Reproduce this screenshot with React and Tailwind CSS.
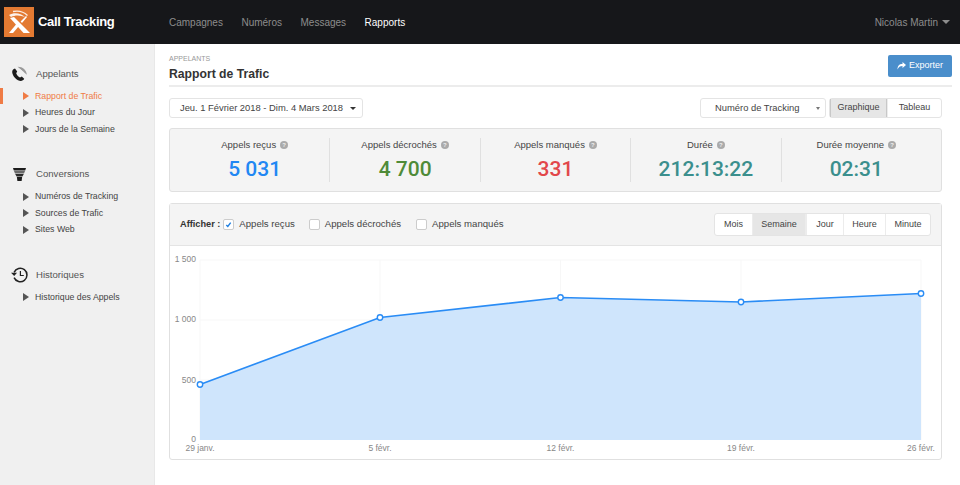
import React from "react";

const F = "font-['Liberation_Sans',Arial,sans-serif]";

function Logo() {
  return (
    <svg width="30" height="30" viewBox="0 0 30 30" className="block">
      <rect width="30" height="30" fill="#e37a32" />
      <path d="M6 11 L10 10 L26 26 L19.5 26 Z" fill="#fff" />
      <path d="M5 26 L13.2 16 L15.4 18.4 L9 26 Z" fill="#fff" />
      <path d="M16.6 14.6 L22 9 L23 10 L18 16 Z" fill="#fff" />
      <path d="M5 8 C10 5 17 6 21 10 C16 8 11 8 7 10 Z" fill="#fff" opacity="0.9" />
      <path d="M9 4.5 C14 3.5 20 5 23.5 8.5" stroke="#fff" strokeWidth="1.3" fill="none" opacity="0.85" />
    </svg>
  );
}

function PhoneIcon() {
  return (
    <svg width="17" height="16" viewBox="0 0 17 16">
      <path d="M4 2.5 L6.2 5.4 L5.2 7.2 C5.8 9 7.2 10.6 9 11.4 L10.8 10.4 L13.2 12.8 C12.2 15 9.6 15.6 7 14.2 C3.6 12.4 1.2 8.8 1.2 5.8 C1.2 4.2 2.2 3 4 2.5 Z" fill="#1c1c1c" />
      <path d="M6.6 0.8 L15.8 8.8 C15.6 4.2 11.4 0.6 6.6 0.8 Z" fill="#9a9a9a" />
      <path d="M7 3 C10 3.4 12.6 5.6 13.6 8.6 M7.4 5 C9 5.4 10.6 6.8 11.4 8.6" stroke="#f0f0f0" strokeWidth="0.7" fill="none" />
    </svg>
  );
}

function FunnelIcon() {
  return (
    <svg width="13" height="13" viewBox="0 0 13 13">
      <path d="M0 0 H13 L12.2 2.4 H0.8 Z" fill="#1c1c1c" />
      <path d="M1 2.9 H12 L11 5.4 H2 Z" fill="#6a6a6a" />
      <path d="M2.2 5.9 H10.8 L9.4 8.4 H3.6 Z" fill="#2a2a2a" />
      <path d="M3.9 8.9 H9.1 L8.6 13 H4.4 Z" fill="#1c1c1c" />
    </svg>
  );
}

function HistoryIcon() {
  return (
    <svg width="17" height="16" viewBox="0 0 17 16" fill="none" stroke="#222" strokeWidth="1.5">
      <path d="M3.1 5.4 A6.7 6.7 0 1 1 3.1 10.6" />
      <path d="M0 5.8 L3.2 9 L6 5.8 Z" fill="#222" stroke="none" />
      <path d="M9.4 4 V8.5 H12.8" strokeWidth="1.2" />
    </svg>
  );
}

function Tri({ active }) {
  return (
    <span className={`mr-[6px] ml-[23px] h-0 w-0 border-y-[4px] border-l-[6px] border-y-transparent ${active ? "border-l-[#ef7b45]" : "border-l-[#555]"}`} />
  );
}

function SideItem({ children, active }) {
  return (
    <div className={`relative flex h-[16.5px] items-center text-[8.75px] ${active ? "text-[#ef7b45]" : "text-[#444]"}`}>
      {active && <span className="absolute top-0 left-0 h-[16px] w-[3px] bg-[#ef7b45]" />}
      <Tri active={active} />
      <span>{children}</span>
    </div>
  );
}

function SideGroup({ icon, title, items, active, className }) {
  return (
    <div className={className}>
      <div className="flex h-[22px] items-center">
        <span className="flex w-[36px] justify-center pl-[2px]">{icon}</span>
        <span className="text-[9.6px] text-[#555]">{title}</span>
      </div>
      <div className="mt-[3px]">
        {items.map((i) => (
          <SideItem key={i} active={i === active}>{i}</SideItem>
        ))}
      </div>
    </div>
  );
}

function Stat({ label, value, color, border }) {
  return (
    <div className={`flex h-[44px] flex-1 flex-col items-center ${border ? "border-l border-[#e0e0e0]" : ""}`}>
      <div className="flex h-[14px] items-center text-[9.5px] text-[#444]">
        {label}
        <span className="ml-[4px] flex h-[8px] w-[8px] items-center justify-center rounded-full bg-[#aaa] text-[6px] leading-none font-bold text-[#eee]">?</span>
      </div>
      <div className={`mt-[3px] font-['Roboto',Arial,sans-serif] text-[21px] leading-[28px] font-medium ${color}`}>{value}</div>
    </div>
  );
}

function Check({ checked, label, className }) {
  return (
    <div className={`flex items-center ${className || ""}`}>
      <span className="flex h-[11px] w-[11px] items-center justify-center rounded-[2px] border border-[#ccc] bg-white">
        {checked && (
          <svg width="7" height="7" viewBox="0 0 8 8">
            <path d="M1.5 4.5 L3.2 6.2 L6.5 1.8" stroke="#1e7fe0" strokeWidth="1.6" fill="none" />
          </svg>
        )}
      </span>
      <span className="ml-[5px] text-[9.6px] text-[#444]">{label}</span>
    </div>
  );
}

function Chart() {
  const pts = [
    [200, 384.5],
    [380, 317.5],
    [560.5, 297.5],
    [741, 302],
    [921, 293.5],
  ].map(([x, y]) => [x - 170, y - 246]);
  const line = pts.map((p) => p.join(",")).join(" ");
  const base = 194;
  const area = `${pts[0][0]},${base} ${line} ${pts[4][0]},${base}`;
  return (
    <svg width="771" height="212" viewBox="0 0 771 212" className="block">
      {[14, 74, 134].map((y) => (
        <line key={y} x1="30" x2="751" y1={y} y2={y} stroke="#f7f7f7" />
      ))}
      {[30, 210, 390.5, 571, 751].map((x) => (
        <line key={x} x1={x} x2={x} y1="14" y2={base} stroke="#f7f7f7" />
      ))}
      <polygon points={area} fill="#cfe5fc" />
      <polyline points={line} fill="none" stroke="#2a8cf5" strokeWidth="1.7" />
      {pts.map(([x, y]) => (
        <circle key={x} cx={x} cy={y} r="2.7" fill="#fff" stroke="#2a8cf5" strokeWidth="1.4" />
      ))}
      <g fontFamily="'Liberation Sans', Arial, sans-serif" fontSize="8.5" fill="#888">
        <text x="26" y="16" textAnchor="end">1 500</text>
        <text x="26" y="76" textAnchor="end">1 000</text>
        <text x="26" y="137" textAnchor="end">500</text>
        <text x="26" y="196" textAnchor="end">0</text>
        <text x="30" y="205" textAnchor="middle">29 janv.</text>
        <text x="210" y="205" textAnchor="middle">5 févr.</text>
        <text x="390.5" y="205" textAnchor="middle">12 févr.</text>
        <text x="571" y="205" textAnchor="middle">19 févr.</text>
        <text x="751" y="205" textAnchor="middle">26 févr.</text>
      </g>
    </svg>
  );
}

function Seg({ items, active, h }) {
  return (
    <div className={`flex rounded-[3px] border border-[#e4e4e4] bg-white ${h}`}>
      {items.map(([t, w], i) => (
        <div
          key={t}
          style={{ width: w }}
          className={`flex items-center justify-center text-[9px] text-[#444] ${i ? "border-l border-[#ececec]" : ""} ${t === active ? "border-x border-[#c8c8c8] bg-[#e6e6e6]" : ""}`}
        >
          {t}
        </div>
      ))}
    </div>
  );
}

export default function App() {
  return (
    <div className={`${F} flex h-[485px] w-[960px] flex-col overflow-hidden bg-white antialiased`}>
      <header className="flex h-[44px] shrink-0 items-center bg-[#16171a] pr-[10px] pl-[4px]">
        <Logo />
        <span className="ml-[4px] w-[131px] text-[13px] font-bold tracking-[-0.35px] text-white">Call Tracking</span>
        <nav className="flex gap-[18.5px] text-[10px] text-[#8d8d8d]">
          <span>Campagnes</span>
          <span>Numéros</span>
          <span>Messages</span>
          <span className="text-white">Rapports</span>
        </nav>
        <div className="ml-auto flex items-center text-[10px] text-[#8d8d8d]">
          Nicolas Martin
          <span className="ml-[4px] h-0 w-0 border-x-[4px] border-t-[4px] border-x-transparent border-t-[#8d8d8d]" />
        </div>
      </header>
      <div className="flex min-h-0 flex-1">
        <aside className="w-[155px] shrink-0 border-r border-[#e8e8e8] bg-[#f0f0f0] pt-[19px]">
          <SideGroup icon={<PhoneIcon />} title="Appelants" active="Rapport de Trafic" items={["Rapport de Trafic", "Heures du Jour", "Jours de la Semaine"]} />
          <SideGroup className="mt-[26px]" icon={<FunnelIcon />} title="Conversions" items={["Numéros de Tracking", "Sources de Trafic", "Sites Web"]} />
          <SideGroup className="mt-[26px]" icon={<HistoryIcon />} title="Historiques" items={["Historique des Appels"]} />
        </aside>
        <main className="min-w-0 flex-1 pt-[10px] pr-[18px] pl-[14px]">
          <div className="-mr-[10px] flex h-[33px] items-start justify-between border-b-2 border-[#ececec]">
            <div>
              <div className="text-[7px] leading-[9px] text-[#999]">APPELANTS</div>
              <div className="mt-[3px] text-[12.2px] leading-[17px] font-bold text-[#333]">Rapport de Trafic</div>
            </div>
            <div className="mt-[1px] flex h-[22px] w-[64px] items-center justify-center gap-[3px] rounded-[2px] bg-[#4a8ecb] text-[9px] text-white">
              <svg width="9" height="8" viewBox="0 0 9 8">
                <path d="M5.5 0 L9 3 L5.5 6 V4 C3 4 1.5 5 0.5 7.5 C0.5 4 2 2 5.5 2 Z" fill="#fff" />
              </svg>
              Exporter
            </div>
          </div>
          <div className="mt-[11px] flex h-[20px] items-center">
            <div className="flex h-[20px] w-[194px] items-center justify-center rounded-[3px] border border-[#e4e4e4] pl-[4px] text-[9.4px] text-[#444]">
              Jeu. 1 Février 2018 - Dim. 4 Mars 2018
              <span className="ml-[7px] h-0 w-0 border-x-[3px] border-t-[3px] border-x-transparent border-t-[#333]" />
            </div>
            <div className="relative ml-auto flex h-[20px] w-[126px] items-center rounded-[3px] border border-[#e4e4e4] pl-[14px] text-[9.4px] text-[#444]">
              Numéro de Tracking
              <span className="absolute right-[5px] h-0 w-0 border-x-[2px] border-t-[3px] border-x-transparent border-t-[#777]" />
            </div>
            <div className="ml-[3px]">
              <Seg h="h-[20px]" items={[["Graphique", 57], ["Tableau", 54]]} active="Graphique" />
            </div>
          </div>
          <section className="mt-[10px] flex h-[64px] items-center rounded-[3px] border border-[#e0e0e0] bg-[#f4f4f4] px-[10px]">
            <Stat label="Appels reçus" value="5 031" color="text-[#2187f3]" />
            <Stat label="Appels décrochés" value="4 700" color="text-[#4f8b38]" border />
            <Stat label="Appels manqués" value="331" color="text-[#e2474a]" border />
            <Stat label="Durée" value="212:13:22" color="text-[#3b8f8d]" border />
            <Stat label="Durée moyenne" value="02:31" color="text-[#3b8f8d]" border />
          </section>
          <section className="mt-[11px] h-[257px] rounded-[3px] border border-[#e0e0e0]">
            <div className="flex h-[42px] items-center border-b border-[#e4e4e4] bg-[#f4f4f4] pr-[10px] pl-[10px]">
              <span className="mr-[3px] text-[9.2px] font-bold text-[#333]">Afficher :</span>
              <Check checked label="Appels reçus" className="-mr-[1px]" />
              <Check className="ml-[15px]" label="Appels décrochés" />
              <Check className="ml-[15px]" label="Appels manqués" />
              <div className="ml-auto">
                <Seg h="h-[23px]" items={[["Mois", 37], ["Semaine", 54], ["Jour", 37], ["Heure", 42], ["Minute", 45]]} active="Semaine" />
              </div>
            </div>
            <Chart />
          </section>
        </main>
      </div>
    </div>
  );
}
